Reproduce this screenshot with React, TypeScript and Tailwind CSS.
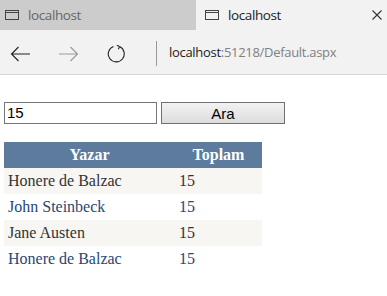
const rows = [
  { yazar: "Honere de Balzac", toplam: 15 },
  { yazar: "John Steinbeck", toplam: 15 },
  { yazar: "Jane Austen", toplam: 15 },
  { yazar: "Honere de Balzac", toplam: 15 },
];

function TabIcon({ color }: { color: string }) {
  return (
    <svg width="14" height="10" viewBox="0 0 14 10" fill="none" stroke={color} strokeWidth="1">
      <rect x="0.5" y="0.5" width="13" height="9" />
      <line x1="0.5" y1="2.5" x2="13.5" y2="2.5" />
    </svg>
  );
}

function Arrow({ dir, color }: { dir: "left" | "right"; color: string }) {
  return (
    <svg width="21" height="16" viewBox="0 0 21 16" fill="none" stroke={color} strokeWidth="1.1">
      {dir === "left" ? (
        <path d="M20 8H1.5M8.5 1L1.5 8l7 7" />
      ) : (
        <path d="M1 8h18.5M12.5 1l7 7-7 7" />
      )}
    </svg>
  );
}

export default function App() {
  return (
    <div className="w-[387px] h-[296px] bg-white overflow-hidden">
      {/* browser chrome */}
      <div className="flex h-[30px] font-['Open_Sans',sans-serif] text-[13.5px]">
        <div className="w-[196px] bg-[#cccccc] flex items-center pl-[5px] gap-[9px] text-[#666]">
          <TabIcon color="#444" />
          <span className="tracking-[-0.4px]">localhost</span>
        </div>
        <div className="flex-1 bg-[#f2f2f2] flex items-center pl-[9px] gap-[9px] text-[#222]">
          <TabIcon color="#444" />
          <span className="tracking-[-0.4px]">localhost</span>
          <svg className="ml-auto mr-[5px]" width="10" height="10" viewBox="0 0 10 10" stroke="#333" strokeWidth="1.1">
            <path d="M0.5 0.5l9 9M9.5 0.5l-9 9" />
          </svg>
        </div>
      </div>
      <div className="flex items-center h-[45px] pt-[3px] bg-[#f2f2f2] border-b border-[#d6d6d6] font-['Open_Sans',sans-serif] text-[13px]">
        <div className="ml-[10px]">
          <Arrow dir="left" color="#222" />
        </div>
        <div className="ml-[27px]">
          <Arrow dir="right" color="#9a9a9a" />
        </div>
        <svg className="ml-[28px]" width="20" height="18" viewBox="0 0 20 18" fill="none" stroke="#222" strokeWidth="1.1">
          <path d="M12.5 1.6A8 8 0 1 1 6.5 1.4" />
          <path d="M12.5 1.6L9.8 0.2M12.5 1.6L11.4 4.2" />
        </svg>
        <div className="ml-[29px] w-px h-[25px] bg-[#999]" />
        <div className="ml-[12px] -mt-[2px] tracking-[-0.3px]">
          <span className="text-[#222]">localhost</span>
          <span className="text-[#808080]">:51218/Default.aspx</span>
        </div>
      </div>

      {/* page */}
      <div className="pt-[27px] pl-[4px] font-['Liberation_Serif',serif]">
        <div className="flex gap-[4px]">
          <input
            defaultValue="15"
            className="w-[153px] h-[22px] border border-[#767676] px-[2px] text-[15px] text-black font-['Liberation_Sans',sans-serif] outline-none"
          />
          <button className="w-[124px] h-[22px] border border-[#707070] bg-gradient-to-b from-[#f2f2f2] to-[#dddddd] text-[15px] text-black font-['Liberation_Sans',sans-serif]">
            Ara
          </button>
        </div>
        <table className="mt-[18px] border-collapse text-[16px] leading-[18px]">
          <thead>
            <tr className="bg-[#5d7b9d] text-white font-bold">
              <th className="w-[171px] h-[26px] p-[4px] text-center">Yazar</th>
              <th className="w-[87px] h-[26px] p-[4px] text-center">Toplam</th>
            </tr>
          </thead>
          <tbody>
            {rows.map((r, i) => (
              <tr key={i} className={i % 2 === 0 ? "bg-[#f7f6f3] text-[#333333]" : "bg-white text-[#284775]"}>
                <td className="h-[26px] p-[4px]">{r.yazar}</td>
                <td className="h-[26px] p-[4px]">{r.toplam}</td>
              </tr>
            ))}
          </tbody>
        </table>
      </div>
    </div>
  );
}
